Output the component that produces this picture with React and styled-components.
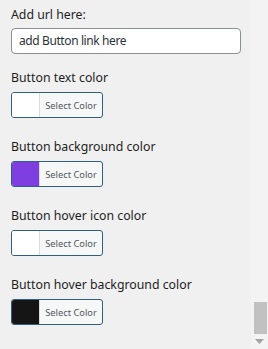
import React from "react";
import styled, { createGlobalStyle } from "styled-components";

const Global = createGlobalStyle`
  html, body { margin: 0; padding: 0; background: #f0f0f0; }
  body { font-family: "Noto Sans", "Open Sans", sans-serif; color: #1e1e1e; }
`;

const Frame = styled.div`
  display: flex;
  width: 268px;
  height: 349px;
  overflow: hidden;
  background: #f0f0f0;
`;

const Content = styled.div`
  flex: 1;
  padding: 6px 0 0 11px;
  display: flex;
  flex-direction: column;
`;

const Label = styled.div`
  font-size: 12.3px;
  line-height: 18px;
  color: #1e1e1e;
  margin-bottom: ${(p) => p.$gap}px;
`;

const UrlInput = styled.div`
  box-sizing: border-box;
  width: 230px;
  height: 26px;
  border: 1px solid #8c8f94;
  border-radius: 4px;
  background: #fff;
  font-size: 12px;
  letter-spacing: -0.4px;
  line-height: 24px;
  padding-left: 7px;
  color: #2c3338;
  margin-bottom: 15px;
`;

const Field = styled.div`
  display: flex;
  flex-direction: column;
  margin-bottom: 20px;
`;

const Picker = styled.div`
  box-sizing: border-box;
  width: 92px;
  height: 26px;
  display: flex;
  border: 1px solid #2f5f80;
  border-radius: 3px;
  overflow: hidden;
  background: #f6f7f7;
`;

const Swatch = styled.div`
  width: 27px;
  background: ${(p) => p.$color};
  border-right: 1px solid #dcdcde;
`;

const PickerText = styled.div`
  flex: 1;
  display: flex;
  align-items: center;
  justify-content: center;
  font-size: 9.3px;
  color: #50575e;
`;

const Scrollbar = styled.div`
  width: 17px;
  background: #f3f3f3;
  display: flex;
  flex-direction: column;
  align-items: center;
  justify-content: flex-end;
  padding-bottom: 3px;
  box-sizing: border-box;
`;

const Thumb = styled.div`
  width: 13px;
  height: 32px;
  background: #c1c1c1;
  margin-bottom: 5px;
  margin-left: 2px;
`;

const Arrow = styled.svg`
  display: block;
  margin-bottom: 2px;
`;

const fields = [
  { label: "Button text color", color: "#ffffff" },
  { label: "Button background color", color: "#7f3fe0" },
  { label: "Button hover icon color", color: "#ffffff" },
  { label: "Button hover background color", color: "#151515" },
];

export default function App() {
  return (
    <>
      <Global />
      <Frame>
        <Content>
          <Label $gap={4}>Add url here:</Label>
          <UrlInput>add Button link here</UrlInput>
          {fields.map((f) => (
            <Field key={f.label}>
              <Label $gap={5}>{f.label}</Label>
              <Picker>
                <Swatch $color={f.color} />
                <PickerText>Select Color</PickerText>
              </Picker>
            </Field>
          ))}
        </Content>
        <Scrollbar>
          <Thumb />
          <Arrow width="9" height="5" viewBox="0 0 9 5">
            <path d="M0 0 H9 L4.5 5 Z" fill="#a3a3a3" />
          </Arrow>
        </Scrollbar>
      </Frame>
    </>
  );
}
